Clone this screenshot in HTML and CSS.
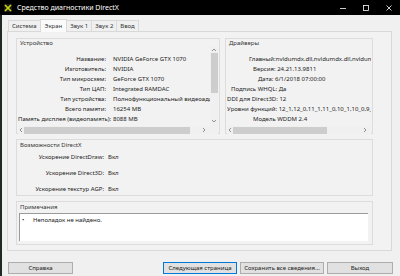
FILE: index.html
```html
<!DOCTYPE html>
<html lang="ru">
<head>
    <meta charset="UTF-8">
    <title>Средство диагностики DirectX</title>
    <link rel="stylesheet" href="styles.css">
</head>
<body>
    <div class="titlebar">
        <svg class="app-icon" width="8" height="8" viewBox="0 0 8 8">
            <rect width="8" height="8" fill="#1b1b1b"/>
            <path d="M1 1 L7 7 M7 1 L1 7" stroke="#c8d600" stroke-width="1.6"/>
        </svg>
        <span class="title">Средство диагностики DirectX</span>
        <div class="controls">
            <svg width="8" height="8" viewBox="0 0 8 8"><path d="M1 4.5 H7" stroke="#fff" stroke-width="0.8"/></svg>
            <svg width="8" height="8" viewBox="0 0 8 8"><rect x="1.5" y="1.5" width="5" height="5" fill="none" stroke="#fff" stroke-width="0.8"/></svg>
            <svg width="8" height="8" viewBox="0 0 8 8"><path d="M1.5 1.5 L6.5 6.5 M6.5 1.5 L1.5 6.5" stroke="#fff" stroke-width="0.8"/></svg>
        </div>
    </div>

    <div class="window">
        <div class="tabs">
            <div class="tab">Система</div>
            <div class="tab active">Экран</div>
            <div class="tab">Звук 1</div>
            <div class="tab">Звук 2</div>
            <div class="tab">Ввод</div>
        </div>

        <div class="panel">
            <div class="top-row">
                <div class="group device">
                    <div class="group-title">Устройство</div>
                    <div class="scroll-box">
                        <div class="scroll-content">
                            <div class="kv"><span class="k">Название:</span><span class="v">NVIDIA GeForce GTX 1070</span></div>
                            <div class="kv"><span class="k">Изготовитель:</span><span class="v">NVIDIA</span></div>
                            <div class="kv"><span class="k">Тип микросхем:</span><span class="v">GeForce GTX 1070</span></div>
                            <div class="kv"><span class="k">Тип ЦАП:</span><span class="v">Integrated RAMDAC</span></div>
                            <div class="kv"><span class="k">Тип устройства:</span><span class="v">Полнофункциональный видеоадаптер</span></div>
                            <div class="kv"><span class="k">Всего памяти:</span><span class="v">16254 MB</span></div>
                            <div class="kv"><span class="k">Память дисплея (видеопамять):</span><span class="v">8088 MB</span></div>
                        </div>
                        <div class="vscroll">
                            <svg class="arrow" width="8" height="6" viewBox="0 0 8 6"><path d="M2 4 L4 2 L6 4" fill="none" stroke="#777" stroke-width="0.8"/></svg>
                            <div class="vthumb"></div>
                            <svg class="arrow down" width="8" height="6" viewBox="0 0 8 6"><path d="M2 2 L4 4 L6 2" fill="none" stroke="#777" stroke-width="0.8"/></svg>
                        </div>
                        <div class="hscroll">
                            <svg class="arrow" width="6" height="8" viewBox="0 0 6 8"><path d="M4 2 L2 4 L4 6" fill="none" stroke="#777" stroke-width="0.8"/></svg>
                            <div class="hthumb dev-thumb"></div>
                            <svg class="arrow right" width="6" height="8" viewBox="0 0 6 8"><path d="M2 2 L4 4 L2 6" fill="none" stroke="#777" stroke-width="0.8"/></svg>
                        </div>
                        <div class="corner"></div>
                    </div>
                </div>

                <div class="group drivers">
                    <div class="group-title">Драйверы</div>
                    <div class="scroll-box single">
                        <div class="scroll-content">
                            <div class="line in-22">Главный:nvldumdx.dll,nvldumdx.dll,nvldumdx.dll,nvldumdx.dll</div>
                            <div class="line in-26">Версия: 24.21.13.9811</div>
                            <div class="line in-31">Дата: 6/1/2018 07:00:00</div>
                            <div class="line in-4">Подпись WHQL: Да</div>
                            <div class="line">DDI для Direct3D: 12</div>
                            <div class="line">Уровни функций: 12_1,12_0,11_1,11_0,10_1,10_0,9_3,9_2,9_1</div>
                            <div class="line in-26">Модель WDDM 2.4</div>
                        </div>
                        <div class="hscroll">
                            <svg class="arrow" width="6" height="8" viewBox="0 0 6 8"><path d="M4 2 L2 4 L4 6" fill="none" stroke="#777" stroke-width="0.8"/></svg>
                            <div class="hthumb drv-thumb"></div>
                            <svg class="arrow right" width="6" height="8" viewBox="0 0 6 8"><path d="M2 2 L4 4 L2 6" fill="none" stroke="#777" stroke-width="0.8"/></svg>
                        </div>
                    </div>
                </div>
            </div>

            <div class="group features">
                <div class="group-title">Возможности DirectX</div>
                <div class="feat"><span class="k">Ускорение DirectDraw:</span><span class="v">Вкл</span></div>
                <div class="feat"><span class="k">Ускорение Direct3D:</span><span class="v">Вкл</span></div>
                <div class="feat"><span class="k">Ускорение текстур AGP:</span><span class="v">Вкл</span></div>
            </div>

            <div class="group notes">
                <div class="group-title">Примечания</div>
                <div class="notes-box">
                    <span class="bullet">•</span><span>Неполадок не найдено.</span>
                </div>
            </div>
        </div>

        <div class="buttons">
            <button class="btn help">Справка</button>
            <button class="btn next default">Следующая страница</button>
            <button class="btn save">Сохранить все сведения...</button>
            <button class="btn exit">Выход</button>
        </div>
    </div>
</body>
</html>
```

FILE: styles.css
```css
body {
    margin: 0;
    width: 400px;
    height: 276px;
    overflow: hidden;
    background: #f0f0f0;
    font-family: "Noto Sans", sans-serif;
    font-size: 6px;
    color: #222;
}
.titlebar {
    height: 15px;
    background: #000;
    color: #fff;
    display: flex;
    align-items: center;
    padding-left: 4px;
}
.app-icon {
    margin-right: 5px;
}
.title {
    font-size: 7px;
}
.controls {
    margin-left: auto;
    display: flex;
    gap: 15px;
    padding-right: 7px;
}
.window {
    border-left: 2px solid #1e2a22;
    height: 261px;
    padding: 5px 0 0 6px;
    box-sizing: border-box;
}
.tabs {
    display: flex;
    align-items: flex-end;
    height: 11px;
    position: relative;
    z-index: 1;
}
.tab {
    height: 10px;
    line-height: 10px;
    padding: 0 3px;
    border: 1px solid #d9d9d9;
    border-bottom: none;
    margin-right: -1px;
    background: #f0f0f0;
    color: #333;
}
.tab.active {
    height: 12px;
    line-height: 12px;
    background: #fafafa;
    margin-bottom: -1px;
    padding: 0 4px;
}
.panel {
    width: 385px;
    height: 220px;
    box-sizing: border-box;
    border: 1px solid #d9d9d9;
    margin-left: -1px;
    padding: 6px 18px 0 8px;
    background: #f2f2f2;
}
.top-row {
    display: flex;
    gap: 5px;
    height: 96px;
}
.group {
    border: 1px solid #dcdcdc;
    box-sizing: border-box;
}
.group-title {
    height: 8px;
    line-height: 8px;
    padding-left: 3px;
    color: #333;
}
.device {
    width: 204px;
}
.drivers {
    width: 148px;
}
.scroll-box {
    display: grid;
    grid-template-columns: 1fr 8px;
    grid-template-rows: 79px 8px;
    margin: 0 1px;
}
.scroll-box.single {
    grid-template-columns: 1fr;
}
.scroll-content {
    overflow: hidden;
    white-space: nowrap;
    padding-top: 7px;
}
.kv {
    display: flex;
    height: 10px;
    line-height: 10px;
}
.kv .k {
    width: 88px;
    flex: none;
    text-align: right;
    margin-right: 7px;
}
.line {
    height: 10px;
    line-height: 10px;
}
.in-22 { padding-left: 22px; }
.in-26 { padding-left: 26px; }
.in-31 { padding-left: 31px; }
.in-4 { padding-left: 4px; }
.vscroll {
    display: flex;
    flex-direction: column;
    align-items: center;
    background: #f0f0f0;
}
.arrow {
    flex: none;
}
.arrow.down {
    margin-top: auto;
    margin-bottom: 2px;
}
.vthumb {
    width: 7px;
    height: 40px;
    background: #cdcdcd;
}
.hscroll {
    display: flex;
    align-items: center;
    background: #f0f0f0;
}
.hthumb {
    height: 7px;
    background: #cdcdcd;
}
.dev-thumb {
    width: 166px;
}
.drv-thumb {
    width: 94px;
}
.arrow.right {
    margin-left: auto;
    margin-right: 3px;
}
.corner {
    background: #f0f0f0;
}
.features {
    margin-top: 5px;
    height: 57px;
    padding-top: 1px;
}
.feat {
    display: flex;
    height: 16px;
    line-height: 16px;
}
.feat:first-of-type {
    margin-top: 1px;
}
.feat .k {
    width: 87px;
    text-align: right;
    margin-right: 4px;
}
.notes {
    margin-top: 5px;
    height: 44px;
    padding-top: 1px;
}
.notes-box {
    margin: 2px 4px 0 2px;
    height: 28px;
    background: #fff;
    border-top: 1px solid #9a9a9a;
    border-left: 1px solid #9a9a9a;
    box-sizing: border-box;
    padding: 2px 0 0 2px;
    display: flex;
    line-height: 8px;
}
.bullet {
    width: 11px;
}
.buttons {
    display: flex;
    margin-top: 11px;
}
.btn {
    height: 12px;
    padding: 0;
    font-family: "Noto Sans", sans-serif;
    font-size: 6px;
    color: #222;
    background: #e1e1e1;
    border: 1px solid #adadad;
    box-sizing: border-box;
}
.btn.default {
    border-color: #0078d7;
}
.help {
    width: 65px;
}
.next {
    width: 74px;
    margin-left: 90px;
}
.save {
    width: 84px;
    margin-left: 3px;
}
.exit {
    width: 66px;
    margin-left: 3px;
}
```
